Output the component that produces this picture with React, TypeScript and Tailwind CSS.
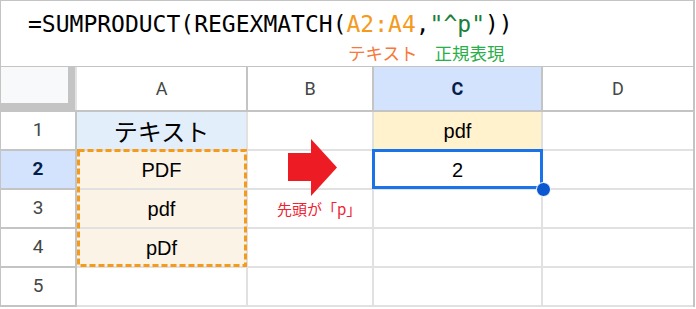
export default function App() {
  return (
    <div className="relative w-[696px] h-[309px] bg-white overflow-hidden">
      <div className="w-[695px] border-l border-t border-r-2 border-[#c4c4c4]">
        {/* formula bar */}
        <div className="h-[66px] border-b border-[#c4c4c4]">
          <div className="pl-[27px] pt-[12px] text-[23px] leading-[23px] font-['DejaVu_Sans_Mono',monospace] text-black whitespace-pre">
            <span>=SUMPRODUCT(REGEXMATCH(</span>
            <span className="text-[#f49a1c]">A2:A4</span>
            <span>,</span>
            <span className="text-[#188038]">"^p"</span>
            <span>))</span>
          </div>
          <div className="flex pl-[347px] mt-[8px] text-[17.5px] leading-[18px] font-['Noto_Sans_CJK_JP',sans-serif]">
            <span className="text-[#f7793a]">テキスト</span>
            <span className="ml-[17px] text-[#2aae4a]">正規表現</span>
          </div>
        </div>

        {/* header row */}
        <div className="flex h-[45px] border-b-2 border-[#c4c4c4] font-['Roboto',sans-serif] text-[18px] text-[#444746]">
          <div className="w-[76px] h-full border-r-2 border-[#e3e3e3] bg-[#c4c4c4]">
            <div className="w-[67px] h-[36px] bg-[#f8f9fa]" />
          </div>
          <div className="w-[171px] flex items-center justify-center border-r-2 border-[#c4c4c4]">A</div>
          <div className="w-[126px] flex items-center justify-center border-r-2 border-[#c4c4c4]">B</div>
          <div className="w-[169px] flex items-center justify-center border-r-2 border-[#c4c4c4] bg-[#d3e3fd] font-bold text-[#041e49]">C</div>
          <div className="w-[150px] flex items-center justify-center">D</div>
        </div>

        {/* row 1 */}
        <div className="flex h-[39px] font-['Liberation_Sans',Arial,sans-serif] text-black">
          <div className="w-[76px] flex items-center justify-center border-r-2 border-b-2 border-[#c4c4c4] font-['Roboto',sans-serif] text-[19px] text-[#444746]">1</div>
          <div className="w-[171px] flex items-center justify-center border-r-2 border-b-2 border-[#e1e1e1] bg-[#e3eefb] text-[24px] font-['Noto_Sans_CJK_JP',sans-serif]">テキスト</div>
          <div className="w-[126px] border-r-2 border-b-2 border-[#e1e1e1]" />
          <div className="w-[169px] flex items-center justify-center border-r-2 border-b-2 border-[#e1e1e1] bg-[#fff2cc] text-[20px]">pdf</div>
          <div className="w-[150px] border-b-2 border-[#e1e1e1]" />
        </div>

        {/* row 2 */}
        <div className="flex h-[39px] font-['Liberation_Sans',Arial,sans-serif] text-black">
          <div className="w-[76px] flex items-center justify-center border-r-2 border-b-2 border-[#c4c4c4] bg-[#d3e3fd] font-['Roboto',sans-serif] text-[19px] font-bold text-[#041e49]">2</div>
          <div className="w-[171px] flex items-center justify-center border-r-2 border-b-2 border-[#e1e1e1] bg-[#fcf3e7] text-[20px]">PDF</div>
          <div className="w-[126px] border-r-2 border-b-2 border-[#e1e1e1]" />
          <div className="w-[169px] flex items-center justify-center border-r-2 border-b-2 border-[#e1e1e1] text-[20px]">2</div>
          <div className="w-[150px] border-b-2 border-[#e1e1e1]" />
        </div>

        {/* row 3 */}
        <div className="flex h-[39px] font-['Liberation_Sans',Arial,sans-serif] text-black">
          <div className="w-[76px] flex items-center justify-center border-r-2 border-b-2 border-[#c4c4c4] font-['Roboto',sans-serif] text-[19px] text-[#444746]">3</div>
          <div className="w-[171px] flex items-center justify-center border-r-2 border-b-2 border-[#e1e1e1] bg-[#fcf3e7] text-[20px]">pdf</div>
          <div className="w-[126px] border-r-2 border-b-2 border-[#e1e1e1]" />
          <div className="w-[169px] border-r-2 border-b-2 border-[#e1e1e1]" />
          <div className="w-[150px] border-b-2 border-[#e1e1e1]" />
        </div>

        {/* row 4 */}
        <div className="flex h-[39px] font-['Liberation_Sans',Arial,sans-serif] text-black">
          <div className="w-[76px] flex items-center justify-center border-r-2 border-b-2 border-[#c4c4c4] font-['Roboto',sans-serif] text-[19px] text-[#444746]">4</div>
          <div className="w-[171px] flex items-center justify-center border-r-2 border-b-2 border-[#e1e1e1] bg-[#fcf3e7] text-[20px]">pDf</div>
          <div className="w-[126px] border-r-2 border-b-2 border-[#e1e1e1]" />
          <div className="w-[169px] border-r-2 border-b-2 border-[#e1e1e1]" />
          <div className="w-[150px] border-b-2 border-[#e1e1e1]" />
        </div>

        {/* row 5 */}
        <div className="flex h-[39px]">
          <div className="w-[76px] flex items-center justify-center border-r-2 border-b-2 border-[#c4c4c4] font-['Roboto',sans-serif] text-[19px] text-[#444746]">5</div>
          <div className="w-[171px] border-r-2 border-b-2 border-[#e1e1e1]" />
          <div className="w-[126px] border-r-2 border-b-2 border-[#e1e1e1]" />
          <div className="w-[169px] border-r-2 border-b-2 border-[#e1e1e1]" />
          <div className="w-[150px] border-b-2 border-[#e1e1e1]" />
        </div>
      </div>

      {/* copy marquee A2:A4 */}
      <svg className="absolute left-[77px] top-[149px]" width="170" height="118" viewBox="0 0 170 118">
        <rect x="1.5" y="1.5" width="167" height="115" fill="none" stroke="#f49a1c" strokeWidth="3" strokeDasharray="6 3" />
      </svg>

      {/* selection C2 */}
      <div className="absolute left-[372px] top-[149px] w-[171px] h-[40px] border-[3px] border-[#1a73e8]" />
      <div className="absolute left-[536px] top-[182px] w-[15px] h-[15px] rounded-full bg-[#0b57d0] border border-white" />

      {/* red arrow */}
      <svg className="absolute left-[288px] top-[139px]" width="49" height="57" viewBox="0 0 49 57">
        <polygon points="0,14 23,14 23,0 49,28.5 23,57 23,42 0,42" fill="#ed1c24" />
      </svg>

      {/* annotation */}
      <div className="absolute left-[277px] top-[198px] text-[15px] leading-[22px] text-[#ee2233] font-['Noto_Sans_CJK_JP',sans-serif] whitespace-nowrap">
        先頭が「p」
      </div>
    </div>
  );
}
